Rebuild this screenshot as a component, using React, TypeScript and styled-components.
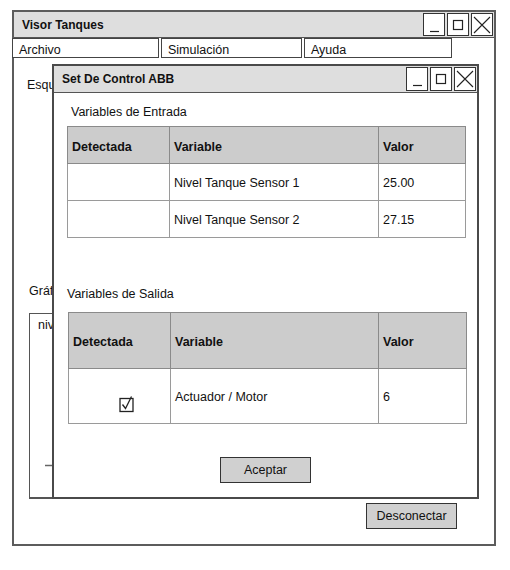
import React from "react";
import styled, { createGlobalStyle } from "styled-components";

const Global = createGlobalStyle`
  html, body { margin: 0; padding: 0; background: #fff; }
  body { font-family: "Liberation Sans", Arial, sans-serif; color: #111; }
`;

const Stage = styled.div`
  position: relative;
  width: 510px;
  height: 570px;
  box-sizing: border-box;
  padding: 10px 0 0 12px;
`;

const Window = styled.div`
  width: 484px;
  height: 536px;
  box-sizing: border-box;
  border: 2px solid #5c5c5c;
  display: flex;
  flex-direction: column;
  background: #fff;
`;

const TitleBar = styled.div<{ $h: number }>`
  height: ${(p) => p.$h}px;
  flex: none;
  display: flex;
  align-items: center;
  justify-content: space-between;
  background: #dedede;
  border-bottom: 1px solid #555;
  padding: 0 1px 0 8px;
`;

const TitleText = styled.span`
  font-weight: bold;
  font-size: 12px;
`;

const Controls = styled.div`
  display: flex;
  gap: 2px;
`;

const CtrlBox = styled.div<{ $h: number }>`
  width: 20px;
  height: ${(p) => p.$h - 2}px;
  border: 1px solid #333;
  background: #fff;
  display: flex;
  align-items: center;
  justify-content: center;
`;

const MenuBar = styled.div`
  display: flex;
  gap: 2px;
  height: 20px;
  flex: none;
  margin-left: -2px;
`;

const MenuItem = styled.div<{ $w: number }>`
  width: ${(p) => p.$w}px;
  box-sizing: border-box;
  border: 1px solid #444;
  font-size: 12.5px;
  line-height: 18px;
  padding: 2px 0 0 6px;
  background: #fff;
`;

const Body = styled.div`
  flex: 1;
  display: flex;
  flex-direction: column;
`;

const Label = styled.div<{ $left: number; $top: number }>`
  font-size: 12.5px;
  line-height: 16px;
  height: 16px;
  padding-left: ${(p) => p.$left}px;
  margin-top: ${(p) => p.$top}px;
  white-space: nowrap;
`;

const ClipLabel = styled.div<{ $left: number; $top: number; $w: number }>`
  font-size: 12.5px;
  line-height: 16px;
  height: 16px;
  margin: ${(p) => p.$top}px 0 0 ${(p) => p.$left}px;
  width: ${(p) => p.$w}px;
  overflow: hidden;
  white-space: nowrap;
`;

const SchemaArea = styled.div`
  height: 190px;
`;

const GraphBox = styled.div`
  position: relative;
  margin: 14px 0 0 15px;
  width: 311px;
  height: 186px;
  box-sizing: border-box;
  border: 1px solid #555;
  border-width: 1px 1px 2px 1px;
`;

const GraphText = styled.span`
  position: absolute;
  left: 8px;
  top: 4px;
  width: 14px;
  overflow: hidden;
  white-space: nowrap;
  font-size: 12.5px;
`;

const Axis = styled.svg`
  position: absolute;
  left: 0;
  top: 0;
`;

const Button = styled.div<{ $w: number }>`
  width: ${(p) => p.$w}px;
  height: 26px;
  box-sizing: border-box;
  border: 1px solid #333;
  background: #d0d0d0;
  font-size: 12.5px;
  display: flex;
  align-items: center;
  justify-content: center;
`;

const RightButton = styled.div`
  display: flex;
  justify-content: flex-end;
  margin: 4px 37px 0 0;
`;

const Dialog = styled.div`
  position: absolute;
  left: 52px;
  top: 64px;
  width: 427px;
  height: 435px;
  box-sizing: border-box;
  border: 2px solid #4a4a4a;
  background: #fff;
  display: flex;
  flex-direction: column;
`;

const DialogBody = styled.div`
  display: flex;
  flex-direction: column;
`;

const Table = styled.table<{ $left: number; $top: number }>`
  border-collapse: collapse;
  margin: ${(p) => p.$top}px 0 0 ${(p) => p.$left}px;
  width: 398px;
  table-layout: fixed;
  font-size: 12.5px;
`;

const Th = styled.th<{ $h: number }>`
  background: #cccccc;
  border: 1px solid #8a8a8a;
  height: ${(p) => p.$h}px;
  box-sizing: border-box;
  text-align: left;
  font-size: 12.5px;
  padding: 3px 0 0 4px;
`;

const Td = styled.td<{ $h: number }>`
  border: 1px solid #9a9a9a;
  height: ${(p) => p.$h}px;
  box-sizing: border-box;
  padding: 1px 0 0 4px;
`;

const CheckCell = styled.td<{ $h: number }>`
  border: 1px solid #9a9a9a;
  height: ${(p) => p.$h}px;
  box-sizing: border-box;
  padding: 26px 0 0 50px;
  vertical-align: top;
`;

const Centered = styled.div`
  display: flex;
  justify-content: center;
  margin-top: 33px;
`;

const Min = () => (
  <svg width="20" height="18" viewBox="0 0 20 18">
    <line x1="6" y1="15.5" x2="15" y2="15.5" stroke="#222" strokeWidth="1.2" />
  </svg>
);
const Max = () => (
  <svg width="20" height="18" viewBox="0 0 20 18">
    <rect x="5.5" y="4.5" width="9" height="9" fill="none" stroke="#222" strokeWidth="1.2" />
  </svg>
);
const Close = () => (
  <svg width="20" height="18" viewBox="0 0 20 18">
    <path d="M2 1 L18 17 M18 1 L2 17" stroke="#222" strokeWidth="1.1" fill="none" />
  </svg>
);

const WinControls = ({ h }: { h: number }) => (
  <Controls>
    <CtrlBox $h={h}><Min /></CtrlBox>
    <CtrlBox $h={h}><Max /></CtrlBox>
    <CtrlBox $h={h}><Close /></CtrlBox>
  </Controls>
);

const Check = () => (
  <svg width="16" height="18" viewBox="0 0 16 18">
    <rect x="1" y="3.5" width="13" height="13" fill="none" stroke="#222" strokeWidth="1.3" />
    <path d="M3.5 9.5 L6.5 13.5 L12.5 1.5" fill="none" stroke="#222" strokeWidth="1.3" />
  </svg>
);

export default function App() {
  return (
    <>
      <Global />
      <Stage>
        <Window>
          <TitleBar $h={25}>
            <TitleText>Visor Tanques</TitleText>
            <WinControls h={23} />
          </TitleBar>
          <MenuBar>
            <MenuItem $w={147}>Archivo</MenuItem>
            <MenuItem $w={141}>Simulación</MenuItem>
            <MenuItem $w={148}>Ayuda</MenuItem>
          </MenuBar>
          <Body>
            <ClipLabel $left={13} $top={19} $w={25}>Esquema de Tanques</ClipLabel>
            <SchemaArea />
            <ClipLabel $left={15} $top={0} $w={23}>Gráfica de niveles</ClipLabel>
            <GraphBox>
              <GraphText>nivel</GraphText>
              <Axis width="30" height="180">
                <line x1="15" y1="151.5" x2="23" y2="151.5" stroke="#666" strokeWidth="1.5" />
              </Axis>
            </GraphBox>
            <RightButton>
              <Button $w={91}>Desconectar</Button>
            </RightButton>
          </Body>
        </Window>

        <Dialog>
          <TitleBar $h={26}>
            <TitleText>Set De Control ABB</TitleText>
            <WinControls h={24} />
          </TitleBar>
          <DialogBody>
            <Label $left={17} $top={11}>Variables de Entrada</Label>
            <Table $left={13} $top={6}>
              <colgroup>
                <col style={{ width: 102 }} />
                <col style={{ width: 209 }} />
                <col style={{ width: 87 }} />
              </colgroup>
              <thead>
                <tr>
                  <Th $h={37}>Detectada</Th>
                  <Th $h={37}>Variable</Th>
                  <Th $h={37}>Valor</Th>
                </tr>
              </thead>
              <tbody>
                <tr>
                  <Td $h={37}></Td>
                  <Td $h={37}>Nivel Tanque Sensor 1</Td>
                  <Td $h={37}>25.00</Td>
                </tr>
                <tr>
                  <Td $h={37}></Td>
                  <Td $h={37}>Nivel Tanque Sensor 2</Td>
                  <Td $h={37}>27.15</Td>
                </tr>
              </tbody>
            </Table>
            <Label $left={13} $top={48}>Variables de Salida</Label>
            <Table $left={14} $top={10}>
              <colgroup>
                <col style={{ width: 102 }} />
                <col style={{ width: 208 }} />
                <col style={{ width: 88 }} />
              </colgroup>
              <thead>
                <tr>
                  <Th $h={56}>Detectada</Th>
                  <Th $h={56}>Variable</Th>
                  <Th $h={56}>Valor</Th>
                </tr>
              </thead>
              <tbody>
                <tr>
                  <CheckCell $h={55}><Check /></CheckCell>
                  <Td $h={55}>Actuador / Motor</Td>
                  <Td $h={55}>6</Td>
                </tr>
              </tbody>
            </Table>
            <Centered>
              <Button $w={91}>Aceptar</Button>
            </Centered>
          </DialogBody>
        </Dialog>
      </Stage>
    </>
  );
}
